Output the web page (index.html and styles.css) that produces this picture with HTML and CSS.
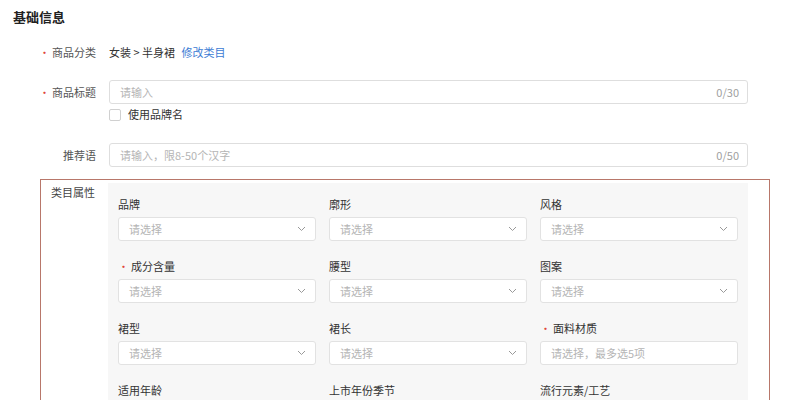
FILE: index.html
```html
<!DOCTYPE html>
<html lang="zh-CN">
<head>
    <meta charset="UTF-8">
    <meta name="viewport" content="width=device-width, initial-scale=1.0">
    <title>基础信息</title>
    <link rel="stylesheet" href="styles.css">
</head>
<body>
    <h1 class="section-title">基础信息</h1>

    <div class="form-row row-category">
        <div class="form-label"><span class="req">•</span>商品分类</div>
        <div class="form-value">
            <span class="category">女装 &gt; 半身裙</span>
            <a class="link" href="#">修改类目</a>
        </div>
    </div>

    <div class="form-row row-title">
        <div class="form-label label-input"><span class="req">•</span>商品标题</div>
        <div class="form-value">
            <div class="text-input">
                <span class="placeholder">请输入</span>
                <span class="counter">0/30</span>
            </div>
            <label class="check">
                <span class="check-box"></span>
                使用品牌名
            </label>
        </div>
    </div>

    <div class="form-row row-slogan">
        <div class="form-label label-input">推荐语</div>
        <div class="form-value">
            <div class="text-input">
                <span class="placeholder">请输入，限8-50个汉字</span>
                <span class="counter">0/50</span>
            </div>
        </div>
    </div>

    <div class="attr-box">
        <div class="attr-label">类目属性</div>
        <div class="attr-panel">
            <div class="attr-grid" id="attrGrid"></div>
        </div>
    </div>

    <script>
        const attrs = [
            { name: '品牌' },
            { name: '廓形' },
            { name: '风格' },
            { name: '成分含量', required: true },
            { name: '腰型' },
            { name: '图案' },
            { name: '裙型' },
            { name: '裙长' },
            { name: '面料材质', required: true, multi: true },
            { name: '适用年龄' },
            { name: '上市年份季节' },
            { name: '流行元素/工艺' }
        ];

        const grid = document.getElementById('attrGrid');
        const chevron = '<svg class="chevron" width="9" height="6" viewBox="0 0 9 6"><path d="M1 1l3.5 3.5L8 1" fill="none" stroke="#999" stroke-width="1"/></svg>';

        attrs.forEach(attr => {
            const item = document.createElement('div');
            item.className = 'attr-item';
            item.innerHTML = `
                <div class="attr-name">${attr.required ? '<span class="req">•</span>' : ''}${attr.name}</div>
                <div class="select">
                    <span class="placeholder">${attr.multi ? '请选择，最多选5项' : '请选择'}</span>
                    ${attr.multi ? '' : chevron}
                </div>
            `;
            grid.appendChild(item);
        });
    </script>
</body>
</html>
```

FILE: styles.css
```css
body {
    margin: 0;
    padding: 7px 0 0;
    font-family: "Noto Sans CJK SC", "Liberation Sans", sans-serif;
    font-size: 11px;
    color: #333;
    background-color: #fff;
}

.section-title {
    margin: 0 0 13px 13px;
    font-size: 13px;
    line-height: 20px;
    font-weight: bold;
    color: #222;
}

.form-row {
    display: flex;
    padding-right: 46px;
}

.row-category {
    line-height: 24px;
    margin-bottom: 16px;
}

.row-title {
    margin-bottom: 20px;
}

.row-slogan {
    margin-bottom: 12px;
}

.form-label {
    width: 96px;
    text-align: right;
    color: #555;
    flex-shrink: 0;
}

.label-input {
    line-height: 24px;
}

.req {
    color: #e0463a;
    line-height: 0;
    margin-right: 2px;
}

.form-value {
    flex: 1;
    margin-left: 13px;
}

.category {
    color: #333;
}

.link {
    color: #3b7bd4;
    text-decoration: none;
    margin-left: 4px;
}

.text-input {
    display: flex;
    justify-content: space-between;
    align-items: center;
    height: 22px;
    padding: 0 8px 0 10px;
    border: 1px solid #dedede;
    border-radius: 3px;
    background-color: #fff;
}

.placeholder {
    color: #b5b5b5;
}

.counter {
    color: #a0a0a0;
}

.check {
    display: flex;
    align-items: center;
    height: 19px;
    color: #333;
}

.check-box {
    width: 10px;
    height: 10px;
    border: 1px solid #d0d0d0;
    border-radius: 2px;
    background-color: #fff;
    margin: 2px 7px 0 0;
}

.attr-box {
    display: flex;
    margin-left: 40px;
    width: 728px;
    height: 240px;
    border: 1px solid #b8776a;
    border-bottom: none;
    padding-top: 3px;
}

.attr-label {
    width: 57px;
    padding-left: 10px;
    line-height: 18px;
    color: #444;
    flex-shrink: 0;
}

.attr-panel {
    width: 620px;
    background-color: #f7f7f7;
    padding: 12px 10px 0;
}

.attr-grid {
    display: grid;
    grid-template-columns: repeat(3, 198px);
    column-gap: 13px;
    row-gap: 16px;
}

.attr-name {
    line-height: 18px;
    margin-bottom: 4px;
    color: #333;
}

.select {
    display: flex;
    justify-content: space-between;
    align-items: center;
    height: 22px;
    padding: 0 9px 0 10px;
    border: 1px solid #e2e2e2;
    border-radius: 3px;
    background-color: #fff;
}
```
